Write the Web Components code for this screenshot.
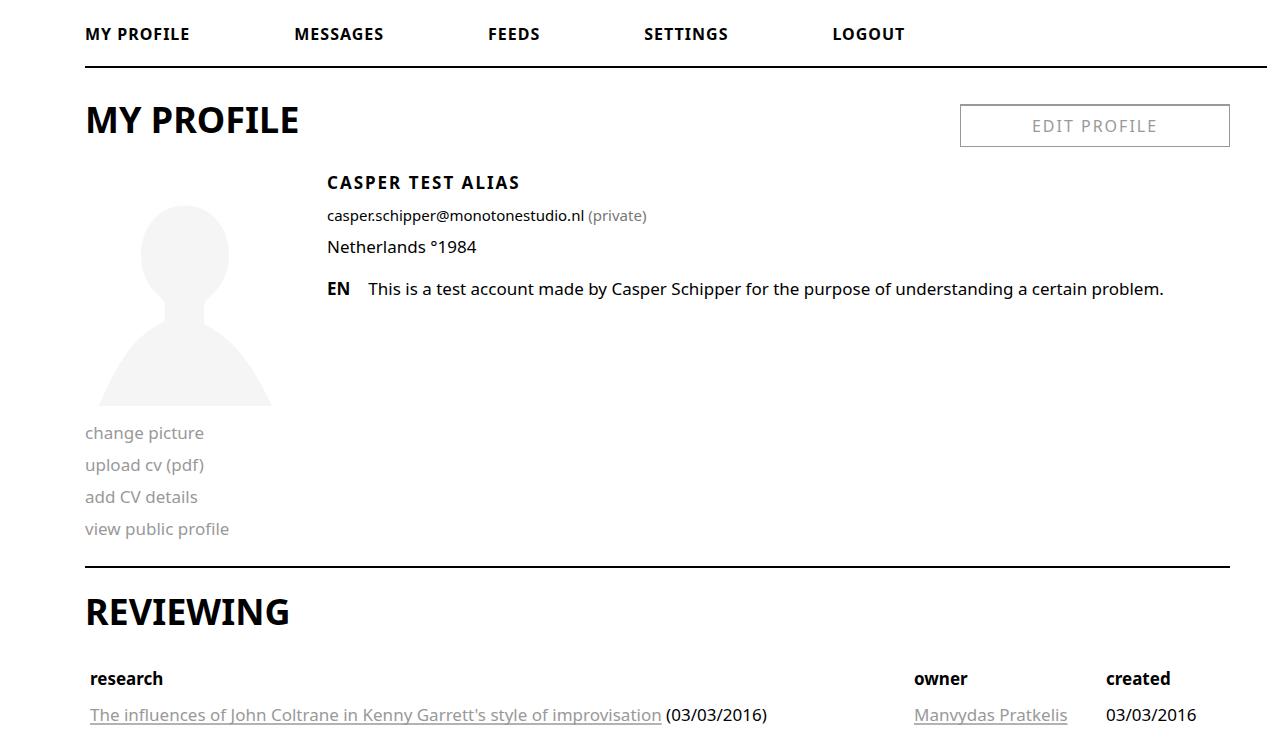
<!DOCTYPE html>
<html lang="en">
<head>
<meta charset="utf-8">
<title>My profile</title>
<style>
body { margin: 0; background: #fff; color: #000; font: 17px/32px "Noto Sans", sans-serif; }
</style>
</head>
<body>
<profile-page></profile-page>
<script>
const define = (name, html) => {
  const t = document.createElement('template');
  t.innerHTML = html;
  customElements.define(name, class extends HTMLElement {
    constructor() {
      super();
      this.attachShadow({ mode: 'open' }).append(t.content.cloneNode(true));
    }
  });
};

define('site-nav', `
<style>
:host { display: block; margin-left: 85px; border-bottom: 2px solid #000; }
nav { display: flex; gap: 104px; padding: 18px 0 16px; }
::slotted(a) { color: #000; text-decoration: none; font-size: 16px; font-weight: 700; letter-spacing: 1px; }
</style>
<nav aria-label="Main"><slot></slot></nav>`);

define('section-title', `
<style>
:host { display: block; }
h2 { margin: 0; font-size: 36px; font-weight: 700; line-height: 32px; }
</style>
<h2><slot></slot></h2>`);

define('edit-button', `
<style>
:host { display: block; width: 270px; }
button { width: 100%; height: 43px; padding: 0; background: #fff; border: 1px solid #999; border-top-width: 2px; border-radius: 0; color: #999; font: 16px/24px "Noto Sans", sans-serif; letter-spacing: 2px; }
</style>
<button type="button"><slot></slot></button>`);

define('user-avatar', `
<style>
:host { display: block; padding-top: 23px; }
svg { display: block; }
</style>
<svg width="200" height="216" viewBox="0 0 200 216" role="img" aria-label="No picture">
<path fill="#f5f5f5" d="M100 15.500C126 15.500 144 37 144 65C144 83 137 95 127 105C122 109 119 112 119 117V134C151 150 169 178 187 216H14C33 171 50 145 77 133Q80 131 80 128V117C80 111 77 109 73 105C62 95 56 83 56 65C56 37 74 15.500 100 15.500Z"/>
</svg>`);

define('picture-links', `
<style>
:host { display: flex; flex-direction: column; align-items: flex-start; padding-top: 11px; }
::slotted(a) { color: #999; text-decoration: none; }
</style>
<slot></slot>`);

define('profile-details', `
<style>
:host { display: block; }
h3 { margin: 0; font-size: 17px; font-weight: 700; letter-spacing: 2px; }
p { margin: 0; }
.mail { font-size: 15px; }
.mail span { color: #777; }
.bio { display: flex; gap: 18px; margin-top: 10px; }
</style>
<h3>CASPER TEST ALIAS</h3>
<p class="mail">casper.schipper@monotonestudio.nl <span>(private)</span></p>
<p>Netherlands °1984</p>
<div class="bio"><b>EN</b><p>This is a test account made by Casper Schipper for the purpose of understanding a certain problem.</p></div>`);

define('review-table', `
<style>
:host { display: block; }
table { width: 100%; border-collapse: collapse; table-layout: fixed; }
th, td { text-align: left; padding: 2px 5px; line-height: 32px; font-size: 17px; }
.owner { width: 182px; }
.created { width: 119px; }
a { color: #999; text-decoration: underline 2px #b3b3b3; text-underline-offset: 2px; text-decoration-skip-ink: none; }
</style>
<table>
<thead><tr><th>research</th><th class="owner">owner</th><th class="created">created</th></tr></thead>
<tbody><tr><td><a href="#research">The influences of John Coltrane in Kenny Garrett's style of improvisation</a> (03/03/2016)</td><td><a href="#owner">Manvydas Pratkelis</a></td><td>03/03/2016</td></tr></tbody>
</table>`);

define('profile-page', `
<style>
:host { display: block; }
main { margin: 0 37px 0 85px; }
header { display: flex; justify-content: space-between; align-items: flex-start; padding-top: 36px; }
.profile { display: grid; grid-template-columns: 200px 1fr; column-gap: 42px; padding: 20px 0 21px; border-bottom: 2px solid #000; }
.reviewing { padding-top: 28px; }
review-table { margin-top: 33px; }
</style>
<site-nav>
<a href="#profile">MY PROFILE</a><a href="#messages">MESSAGES</a><a href="#feeds">FEEDS</a><a href="#settings">SETTINGS</a><a href="#logout">LOGOUT</a>
</site-nav>
<main>
<header><section-title>MY PROFILE</section-title><edit-button>EDIT PROFILE</edit-button></header>
<section class="profile">
<div>
<user-avatar></user-avatar>
<picture-links><a href="#picture">change picture</a><a href="#cv">upload cv (pdf)</a><a href="#details">add CV details</a><a href="#public">view public profile</a></picture-links>
</div>
<profile-details></profile-details>
</section>
<section class="reviewing"><section-title>REVIEWING</section-title><review-table></review-table></section>
</main>`);
</script>
</body>
</html>
